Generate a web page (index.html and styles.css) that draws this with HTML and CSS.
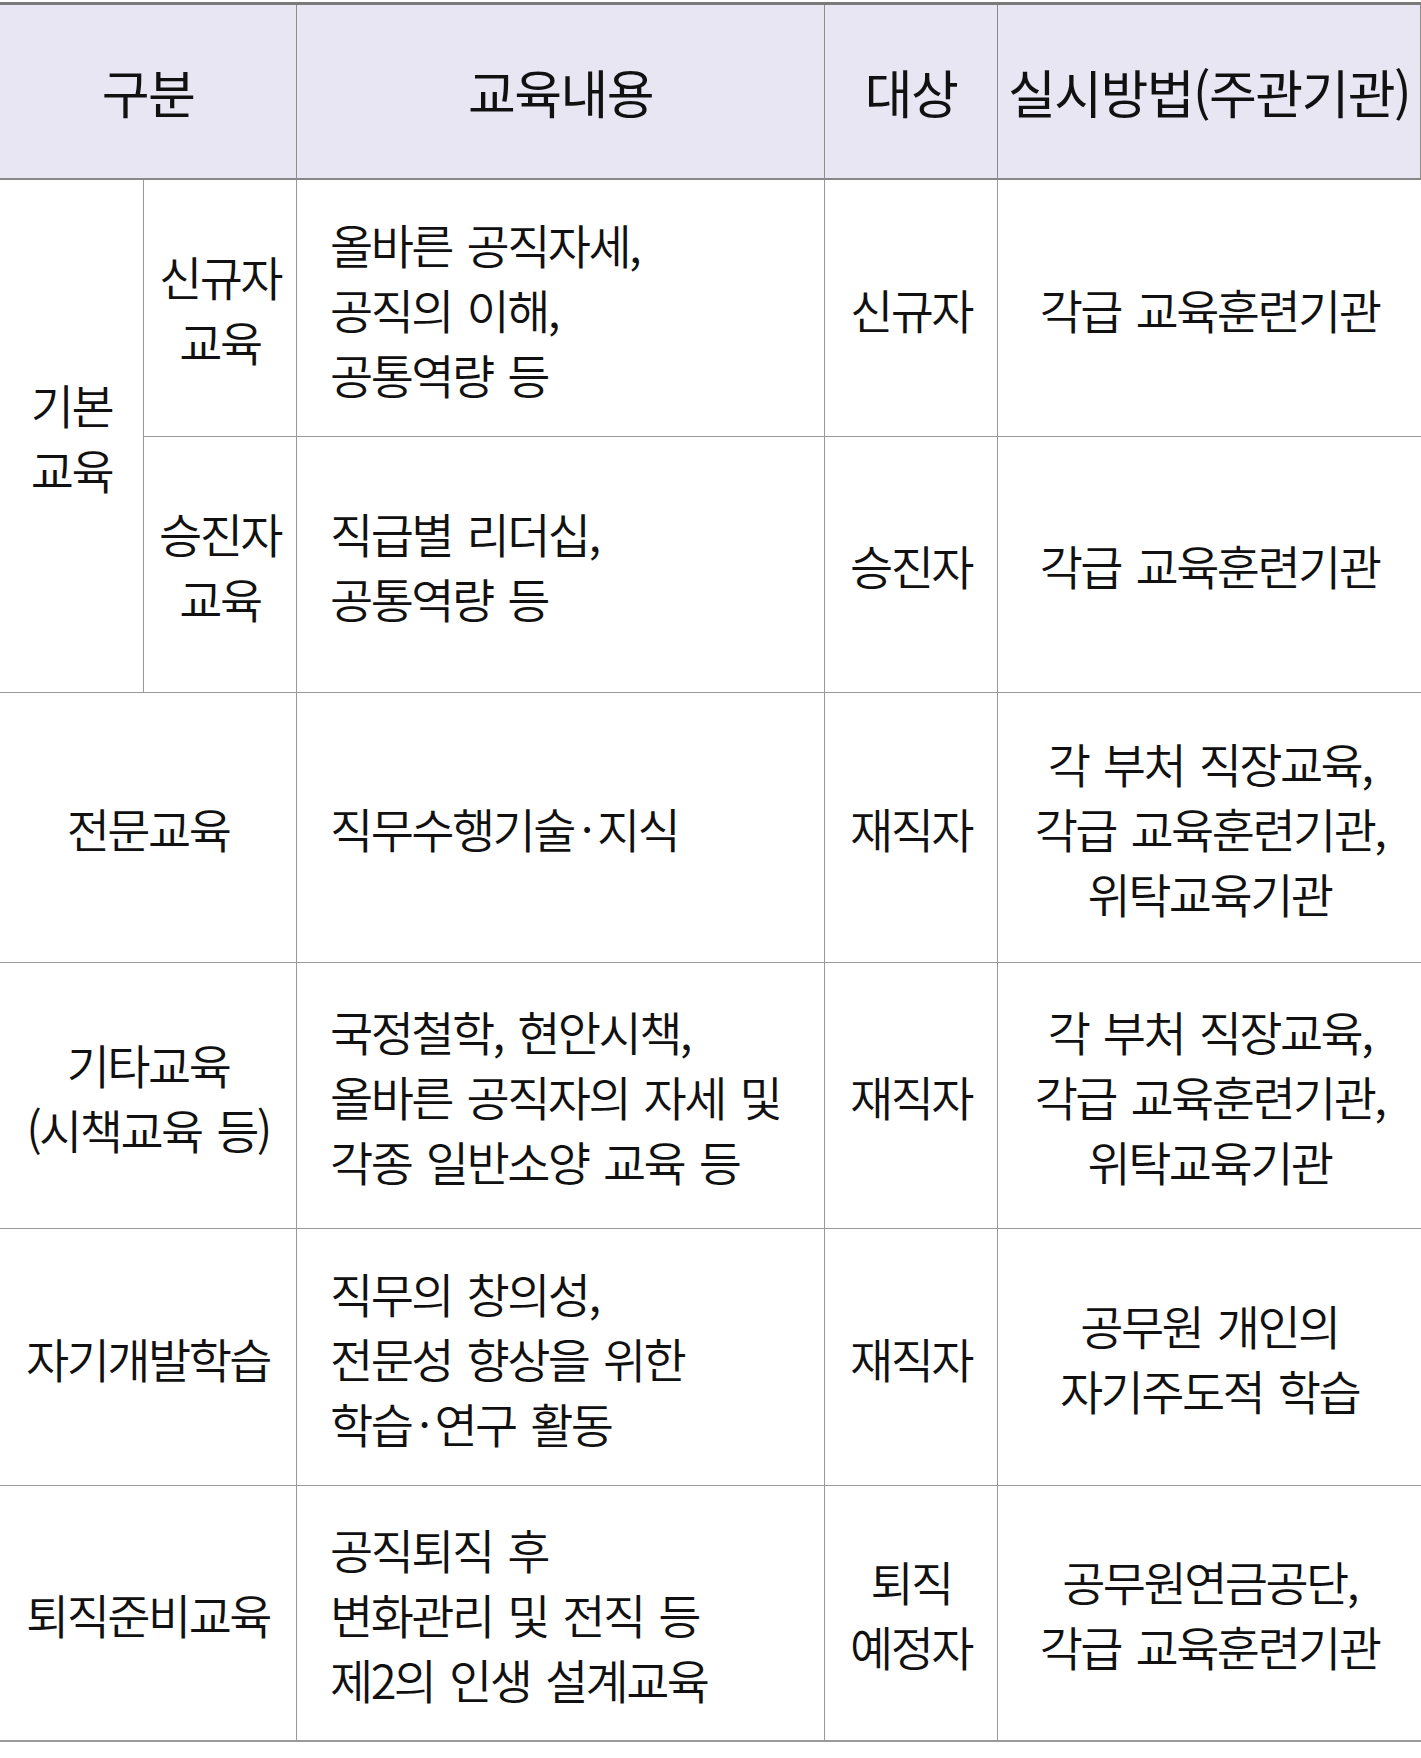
FILE: index.html
```html
<!DOCTYPE html>
<html lang="ko">
<head>
<meta charset="utf-8">
<title>교육 구분</title>
<link rel="stylesheet" href="styles.css">
</head>
<body>
<table class="edu">
  <colgroup>
    <col class="c1"><col class="c2"><col class="c3"><col class="c4"><col class="c5">
  </colgroup>
  <thead>
    <tr class="head">
      <th colspan="2">구분</th>
      <th>교육내용</th>
      <th>대상</th>
      <th class="last">실시방법(주관기관)</th>
    </tr>
  </thead>
  <tbody>
    <tr class="r1">
      <td rowspan="2" class="ctr">기본<br>교육</td>
      <td class="ctr">신규자<br>교육</td>
      <td class="left">올바른 공직자세,<br>공직의 이해,<br>공통역량 등</td>
      <td class="ctr">신규자</td>
      <td class="ctr last">각급 교육훈련기관</td>
    </tr>
    <tr class="r2">
      <td class="ctr">승진자<br>교육</td>
      <td class="left">직급별 리더십,<br>공통역량 등</td>
      <td class="ctr">승진자</td>
      <td class="ctr last">각급 교육훈련기관</td>
    </tr>
    <tr class="r3">
      <td colspan="2" class="ctr">전문교육</td>
      <td class="left">직무수행기술<span class="dot">·</span>지식</td>
      <td class="ctr">재직자</td>
      <td class="ctr last">각 부처 직장교육,<br>각급 교육훈련기관,<br>위탁교육기관</td>
    </tr>
    <tr class="r4">
      <td colspan="2" class="ctr">기타교육<br>(시책교육 등)</td>
      <td class="left">국정철학, 현안시책,<br>올바른 공직자의 자세 및<br>각종 일반소양 교육 등</td>
      <td class="ctr">재직자</td>
      <td class="ctr last">각 부처 직장교육,<br>각급 교육훈련기관,<br>위탁교육기관</td>
    </tr>
    <tr class="r5">
      <td colspan="2" class="ctr">자기개발학습</td>
      <td class="left">직무의 창의성,<br>전문성 향상을 위한<br>학습<span class="dot">·</span>연구 활동</td>
      <td class="ctr">재직자</td>
      <td class="ctr last">공무원 개인의<br>자기주도적 학습</td>
    </tr>
    <tr class="r6 final">
      <td colspan="2" class="ctr">퇴직준비교육</td>
      <td class="left">공직퇴직 후<br>변화관리 및 전직 등<br>제2의 인생 설계교육</td>
      <td class="ctr">퇴직<br>예정자</td>
      <td class="ctr last">공무원연금공단,<br>각급 교육훈련기관</td>
    </tr>
  </tbody>
</table>
</body>
</html>
```
FILE: styles.css
```css
html, body {
  margin: 0;
  padding: 0;
  background: #ffffff;
}

body {
  font-family: "Noto Sans CJK KR", "Noto Sans", sans-serif;
  color: #111111;
}

.edu {
  width: 1421px;
  margin-top: 2px;
  table-layout: fixed;
  border-collapse: separate;
  border-spacing: 0;
  border-top: 3px solid #7a7a7a;
}

.c1 { width: 144px; }
.c2 { width: 153px; }
.c3 { width: 528px; }
.c4 { width: 173px; }
.c5 { width: 423px; }

.edu th,
.edu td {
  padding: 0;
  white-space: nowrap;
  vertical-align: middle;
}

.edu th {
  background: #e9e6f4;
  border-bottom: 2px solid #888888;
  border-right: 1px solid #8c8c8c;
  font-size: 52px;
  font-weight: 400;
  letter-spacing: -1.6px;
  line-height: 60px;
  text-align: center;
}

.edu td {
  border-bottom: 1px solid #999999;
  border-right: 1px solid #999999;
  font-size: 47px;
  font-weight: 350;
  letter-spacing: -2.6px;
  word-spacing: 4px;
  line-height: 65px;
}

.edu td.last {
  border-right: none;
}

.edu .final td {
  border-bottom: 2px solid #9a9a9a;
}

.dot {
  margin: 0 6px 0 7px;
}

.ctr { text-align: center; }
.left { text-align: left; padding-left: 33px !important; }

.head { height: 175px; }
.r1 { height: 257px; }
.r2 { height: 256px; }
.r3 { height: 270px; }
.r4 { height: 266px; }
.r5 { height: 257px; }
.r6 { height: 256px; }
```
